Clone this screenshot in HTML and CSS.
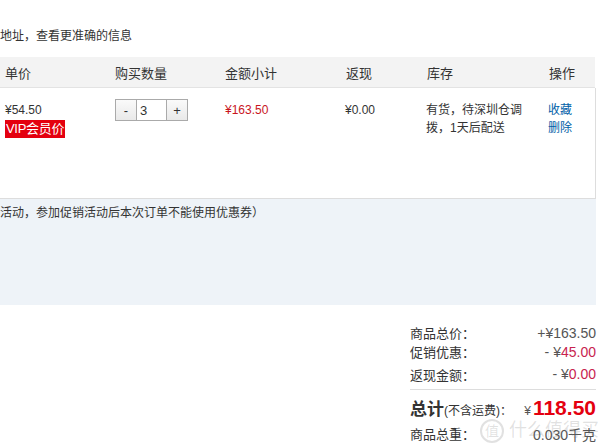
FILE: index.html
```html
<!DOCTYPE html>
<html lang="zh-CN">
  <head>
    <meta charset="UTF-8" />
    <meta name="viewport" content="width=device-width, initial-scale=1.0" />
    <title>购物车</title>
    <link rel="stylesheet" href="styles.css">
  </head>
  <body>
    <div class="cart">
      <p class="addr-tip">地址，查看更准确的信息</p>

      <div class="cart-head">
        <span>单价</span>
        <span>购买数量</span>
        <span>金额小计</span>
        <span>返现</span>
        <span>库存</span>
        <span>操作</span>
      </div>

      <div class="cart-item">
        <div class="col-price">
          <div>¥54.50</div>
          <span class="vip-tag">VIP会员价</span>
        </div>
        <div class="col-qty">
          <div class="qty-box">
            <button class="qty-btn">-</button>
            <input class="qty-input" type="text" value="3" />
            <button class="qty-btn">+</button>
          </div>
        </div>
        <div class="col-sum">¥163.50</div>
        <div class="col-back">¥0.00</div>
        <div class="col-stock">有货，待深圳仓调<br />拨，1天后配送</div>
        <div class="col-ops">
          <a href="#">收藏</a>
          <a href="#">删除</a>
        </div>
      </div>

      <div class="promo">活动，参加促销活动后本次订单不能使用优惠券）</div>

      <div class="summary">
        <div class="sum-row">
          <span class="sum-label">商品总价：</span>
          <span class="sum-value">+¥163.50</span>
        </div>
        <div class="sum-row">
          <span class="sum-label">促销优惠：</span>
          <span class="sum-value">- ¥<em>45.00</em></span>
        </div>
        <div class="sum-row sum-gap">
          <span class="sum-label">返现金额：</span>
          <span class="sum-value">- ¥<em>0.00</em></span>
        </div>
        <div class="sum-total">
          <span class="total-label">总计<small>(不含运费)：</small></span>
          <span class="total-value"><small>¥</small>118.50</span>
        </div>
        <div class="sum-row">
          <span class="sum-label">商品总重：</span>
          <span class="sum-value">0.030千克</span>
        </div>
        <div class="watermark"><i>值</i> 什么值得买</div>
      </div>
    </div>
  </body>
</html>
```

FILE: styles.css
```css
* {
  margin: 0;
  padding: 0;
  box-sizing: border-box;
}

body {
  font-family: "Liberation Sans", "Noto Sans CJK SC", sans-serif;
  font-size: 12px;
  color: #333;
  background: #fff;
}

.cart {
  width: 596px;
}

.addr-tip {
  padding-top: 27px;
  line-height: 18px;
  height: 57px;
}

.cart-head {
  display: grid;
  grid-template-columns: 110px 110px 121px 81px 122px 1fr;
  align-items: center;
  height: 31px;
  padding-left: 5px;
  background: #f3f3f3;
  border-bottom: 1px solid #e3e3e3;
  font-size: 13px;
  width: 595px;
}

.cart-item {
  display: grid;
  grid-template-columns: 110px 110px 120px 81px 121px 1fr;
  align-items: start;
  height: 111px;
  padding: 13px 0 0 5px;
  line-height: 18px;
  border-right: 1px solid #ddd;
  border-bottom: 1px solid #ddd;
  width: 596px;
}

.vip-tag {
  display: inline-block;
  margin-top: 1px;
  padding: 0 1px;
  background: #e4000f;
  color: #fff;
  font-size: 13px;
  line-height: 18px;
  letter-spacing: -0.3px;
}

.qty-box {
  display: flex;
  height: 22px;
  margin-top: -2px;
}

.qty-btn {
  width: 22px;
  height: 22px;
  border: 1px solid #aaa;
  background: linear-gradient(#fafafa, #e9e9e9);
  font-family: inherit;
  font-size: 13px;
  color: #333;
}

.qty-input {
  width: 29px;
  height: 22px;
  border: 1px solid #aaa;
  border-left: none;
  border-right: none;
  padding-left: 3px;
  font-family: inherit;
  font-size: 13px;
  color: #333;
}

.col-sum {
  color: #c9151e;
}

.col-ops {
  display: flex;
  flex-direction: column;
  padding-left: 1px;
}

.col-ops a {
  color: #005ea7;
  text-decoration: none;
}

.promo {
  height: 106px;
  padding-top: 6px;
  line-height: 16px;
  background: #eef3f8;
  width: 596px;
}

.summary {
  position: relative;
  width: 186px;
  margin: 18px 0 0 410px;
}

.sum-row {
  display: flex;
  justify-content: space-between;
  align-items: center;
  height: 19px;
  font-size: 13px;
}

.sum-value {
  font-size: 14px;
  color: #555;
}

.sum-value em {
  font-style: normal;
  color: #c8234f;
}

.sum-gap {
  height: 24px;
  margin-top: 1px;
}

.sum-total {
  display: flex;
  justify-content: space-between;
  align-items: baseline;
  margin-top: 3px;
  padding-top: 5px;
  height: 35px;
  border-top: 1px solid #ddd;
}

.total-label {
  font-size: 17px;
  font-weight: bold;
}

.total-label small {
  font-size: 12px;
  font-weight: normal;
}

.total-value {
  font-size: 21px;
  font-weight: bold;
  color: #e4000f;
}

.total-value small {
  font-size: 12px;
  font-weight: normal;
  color: #555;
  margin-right: 2px;
}

.watermark {
  position: absolute;
  left: 70px;
  top: 92px;
  font-size: 18px;
  color: rgba(120, 120, 120, 0.22);
  white-space: nowrap;
  pointer-events: none;
}

.watermark i {
  font-style: normal;
  display: inline-block;
  width: 24px;
  height: 24px;
  line-height: 21px;
  text-align: center;
  font-size: 14px;
  border: 2px solid rgba(120, 120, 120, 0.22);
  border-radius: 50%;
}
```
